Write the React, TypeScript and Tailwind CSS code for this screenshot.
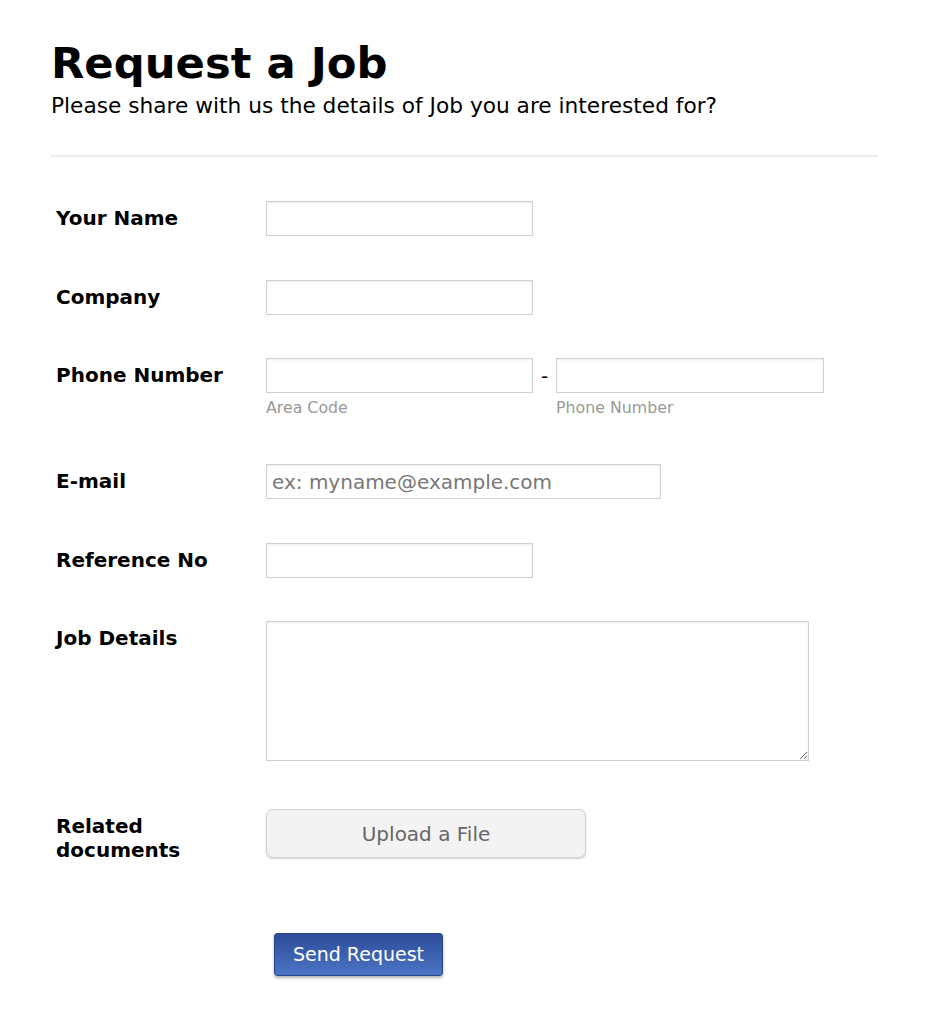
import React from "react";

const inputCls =
  "h-[35px] border border-[#d0d0d0] bg-white px-[5px] outline-none shadow-[inset_0_1px_2px_rgba(0,0,0,0.08)]";

function Row({ label, children, className = "" }: { label: React.ReactNode; children: React.ReactNode; className?: string }) {
  return (
    <div className={"flex " + className}>
      <div className="w-[215px] shrink-0 pl-[5px] pt-[5px] pr-[40px] text-[20px] font-bold leading-[24px] text-black">
        {label}
      </div>
      <div>{children}</div>
    </div>
  );
}

export default function App() {
  return (
    <div className="min-h-screen bg-white" style={{ fontFamily: '"DejaVu Sans", Verdana, sans-serif' }}>
      <div className="ml-[51px] w-[827px] pt-[38px]">
        <h1 className="text-[43.3px] font-bold leading-[50px] text-black">Request a Job</h1>
        <p className="mt-[5px] text-[21.7px] leading-[26px] text-black">
          Please share with us the details of Job you are interested for?
        </p>
        <div className="mt-[36px] h-[2px] bg-[#ececec]" />

        <div className="mt-[44px] flex flex-col">
          <Row label="Your Name">
            <input className={inputCls + " w-[267px]"} />
          </Row>
          <Row label="Company" className="mt-[44px]">
            <input className={inputCls + " w-[267px]"} />
          </Row>
          <Row label="Phone Number" className="mt-[43px]">
            <div className="flex items-start">
              <div className="flex flex-col">
                <input className={inputCls + " w-[267px]"} />
                <span className="mt-[5px] text-[15.8px] leading-[20px] text-[#999]">Area Code</span>
              </div>
              <span className="w-[23px] pt-[6px] text-center text-[20px] leading-[24px] text-black">-</span>
              <div className="flex flex-col">
                <input className={inputCls + " w-[268px]"} />
                <span className="mt-[5px] text-[15.8px] leading-[20px] text-[#999]">Phone Number</span>
              </div>
            </div>
          </Row>
          <Row label="E-mail" className="mt-[46px]">
            <input
              className={inputCls + " w-[395px] text-[20px] placeholder:text-[#777]"}
              placeholder="ex: myname@example.com"
            />
          </Row>
          <Row label="Reference No" className="mt-[44px]">
            <input className={inputCls + " w-[267px]"} />
          </Row>
          <Row label="Job Details" className="mt-[43px]">
            <textarea className="block h-[140px] w-[543px] border border-[#d0d0d0] bg-white outline-none shadow-[inset_0_1px_2px_rgba(0,0,0,0.08)]" />
          </Row>
          <Row label={<>Related<br />documents</>} className="mt-[48px]">
            <button className="h-[49px] w-[320px] rounded-[7px] border border-[#cfcfcf] bg-[#f3f3f3] text-[20px] text-[#666] shadow-[0_1px_2px_rgba(0,0,0,0.18)]">
              Upload a File
            </button>
          </Row>
          <div className="mt-[71px] pl-[223px]">
            <button className="h-[43px] w-[169px] rounded-[3px] border border-[#2a468a] bg-gradient-to-b from-[#2d4c99] to-[#4c74c5] text-[19px] text-white shadow-[0_2px_3px_rgba(0,0,0,0.3)]">
              Send Request
            </button>
          </div>
        </div>
      </div>
    </div>
  );
}
